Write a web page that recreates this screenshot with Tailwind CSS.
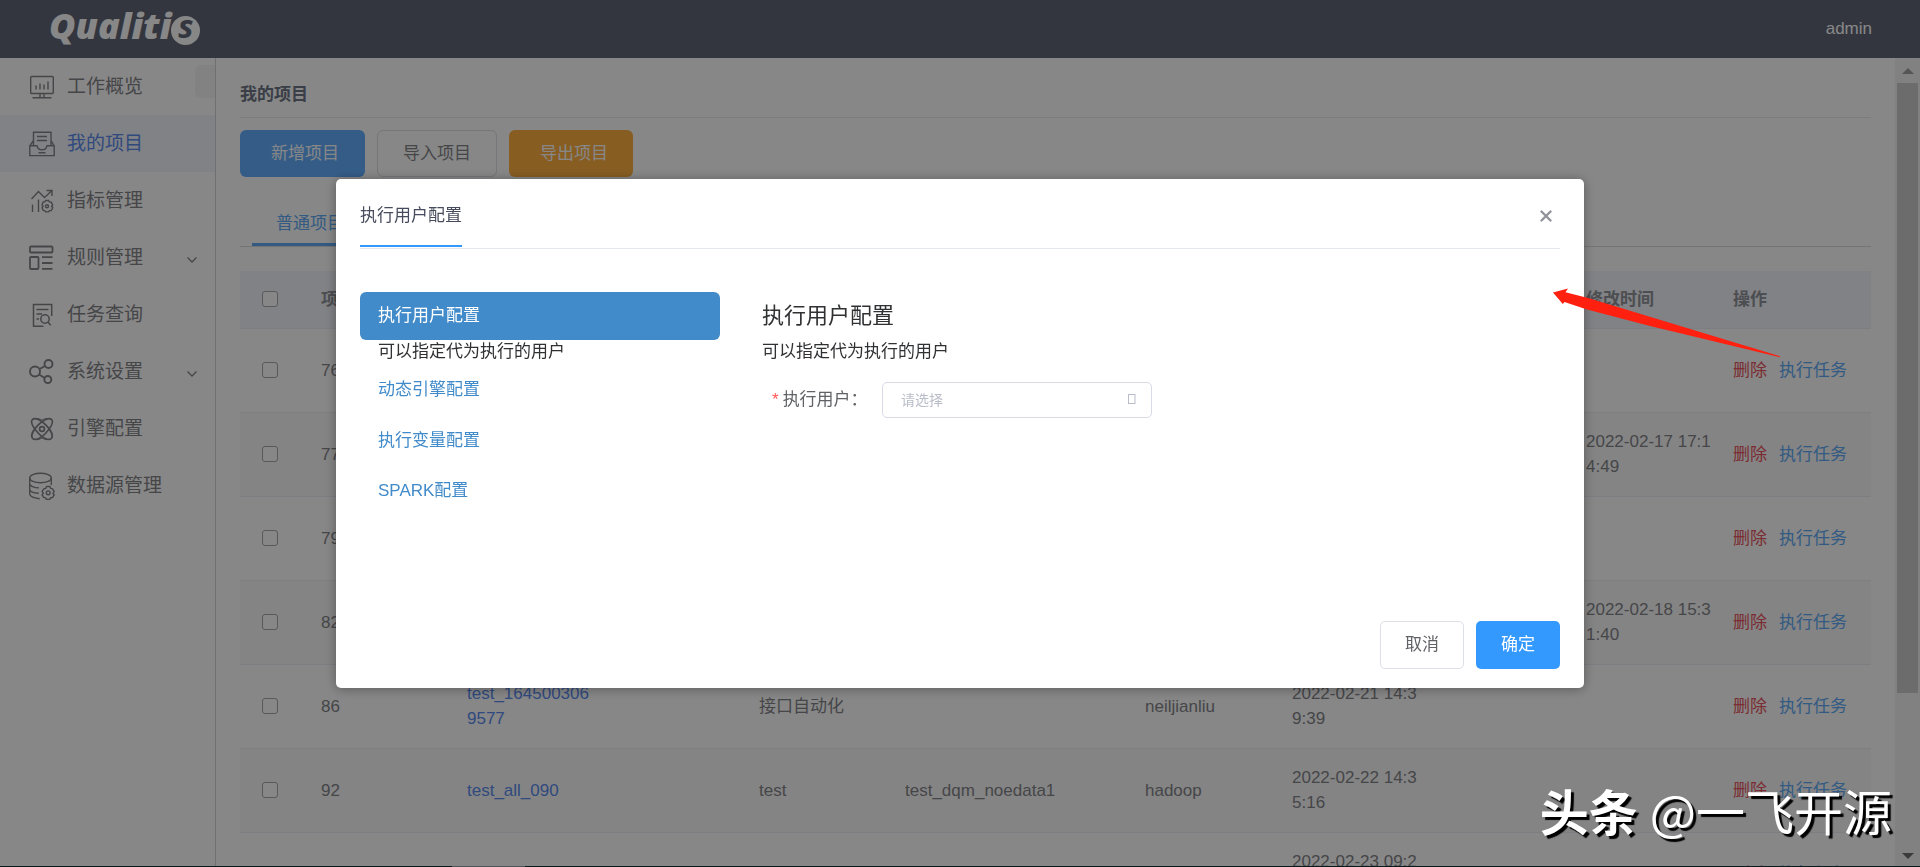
<!DOCTYPE html>
<html lang="zh-CN">
<head>
<meta charset="utf-8">
<title>Qualitis</title>
<script src="https://cdn.jsdelivr.net/npm/@tailwindcss/browser@4"></script>
</head>
<body class="h-screen overflow-hidden bg-white font-['Liberation_Sans','Noto_Sans_CJK_SC',sans-serif] text-[17px] leading-[25px] text-[#84858a]">
<div class="flex h-full flex-col">
  <header class="flex h-[58px] shrink-0 items-center justify-between bg-[#606677] pr-12 pb-0.5 pl-[49px]">
    <a href="#" aria-label="Qualitis" class="flex items-center pb-1 text-white">
      <span class="font-['Open_Sans',sans-serif] text-[36px] leading-none font-extrabold italic">Qualiti</span>
      <span class="mt-2 flex size-[29px] items-center justify-center rounded-full bg-white font-['Open_Sans',sans-serif] text-[32px] leading-none font-bold text-[#606677] italic"><span class="-mt-2">s</span></span>
    </a>
    <a href="#" class="text-[17px] text-white">admin</a>
  </header>

  <div class="flex min-h-0 flex-1">
    <nav class="relative w-[216px] shrink-0 border-r border-[#d4d4d8] text-[19px]">
      <button type="button" aria-label="收起" class="absolute top-[7px] right-0 h-[33px] w-5 rounded-l-md bg-[#f6f6f6]"></button>
      <a href="#" class="flex h-[57px] items-center gap-3 pl-[29px]">
        <svg class="size-6.5 shrink-0" viewBox="0 0 26 26" fill="none" stroke="currentColor" stroke-width="1.4"><rect x="1.7" y="2.5" width="22.6" height="17" rx="1"/><path d="M7 15.5v-4M11 15.5v-6M15 15.5v-5M19 15.5v-8M11 19.5v3.5M15 19.5v3.5M3.5 23.7h19"/></svg>
        <span>工作概览</span></a>
      <a href="#" class="flex h-[57px] items-center gap-3 bg-[#f3f5fb] pl-[29px]">
        <svg class="size-6.5 shrink-0" viewBox="0 0 26 26" fill="none" stroke="currentColor" stroke-width="1.4"><path d="M4.500 14.800V1.300h17.500V14.800M.8 14.800 4.500 9.500M25.200 14.800l-3.200-5.300M.8 14.800h7.200c.6 2.600 2.600 4 5 4s4.400-1.400 5-4h7.200v9.800H.8zM8 5.500h10M8 9.500h10M9.500 21.800h7"/></svg>
        <span class="text-[#5b8cef]">我的项目</span></a>
      <a href="#" class="flex h-[57px] items-center gap-3 pl-[29px]">
        <svg class="size-6.5 shrink-0" viewBox="0 0 26 26" fill="none" stroke="currentColor" stroke-width="1.4"><path d="M2.500 11 9.500 3.500l6 6L23 2.500M17.500 2.500H23V8M3.500 16.500V24M9.500 11.500V24"/><path d="m15.800 13.800.8-1.300h3l.9 1.500 1.800.1 1.400 2.900-1.100 1.300 1.100 1.400-1.400 2.800-1.800.1-.9 1.300h-3l-.9-1.300-1.500-.2-1.200-2.800 1.200-1.300-1.200-1.400 1.200-2.900z"/><circle cx="18" cy="18.300" r="1.500"/></svg>
        <span>指标管理</span></a>
      <a href="#" class="flex h-[57px] items-center gap-3 pl-[29px]">
        <svg class="size-6.5 shrink-0" viewBox="0 0 26 26" fill="none" stroke="currentColor" stroke-width="1.800"><rect x="1" y="1.500" width="22.500" height="6" rx="1"/><rect x="1" y="12" width="8.500" height="12" rx="1"/><path d="M13 12.200h10.500M13 18h10.500M13 23.800h10.500"/></svg>
        <span>规则管理</span>
        <svg class="mt-1 mr-[17px] ml-auto h-2 w-3" viewBox="0 0 12 8" fill="none" stroke="currentColor" stroke-width="1.300"><path d="m1.500 1.500 4.500 4.500 4.500-4.500"/></svg></a>
      <a href="#" class="flex h-[57px] items-center gap-3 pl-[29px]">
        <svg class="size-6.5 shrink-0" viewBox="0 0 26 26" fill="none" stroke="currentColor" stroke-width="1.500"><path d="M14.500 24.300H4.500V2.500h18.200V14M7.500 7.500h12M7.500 12h5.500M7.500 17h2.500"/><circle cx="16" cy="17" r="4.200"/><path d="m19 20.300 2.800 3"/></svg>
        <span>任务查询</span></a>
      <a href="#" class="flex h-[57px] items-center gap-3 pl-[29px]">
        <svg class="size-6.5 shrink-0" viewBox="0 0 26 26" fill="none" stroke="currentColor" stroke-width="1.900"><circle cx="6" cy="12.500" r="5"/><circle cx="19.500" cy="5" r="4"/><circle cx="18.800" cy="20.500" r="3.500"/><path d="m10.500 10 5.500-3M10 15.500l5.800 3.500"/></svg>
        <span>系统设置</span>
        <svg class="mt-1 mr-[17px] ml-auto h-2 w-3" viewBox="0 0 12 8" fill="none" stroke="currentColor" stroke-width="1.300"><path d="m1.500 1.500 4.500 4.500 4.500-4.500"/></svg></a>
      <a href="#" class="flex h-[57px] items-center gap-3 pl-[29px]">
        <svg class="size-6.5 shrink-0" viewBox="0 0 26 26" fill="none" stroke="currentColor" stroke-width="1.700"><path d="M3.500 3.500c2.500-2.300 8.500.7 13 5.200s8.300 10.500 6 13.500-8.700 0-13.200-5S1 6 3.500 3.500z"/><path d="M22.500 3.500c-2.500-2.300-8.500.7-13 5.200S1.200 19.200 3.500 22.200s8.700 0 13.200-5S25 6 22.500 3.500z"/><path d="M6 2.600c3-.5 5 .4 7 1.600 2-1.200 4-2.100 7-1.600M6 23.500c3 .5 5-.4 7-1.600 2 1.200 4 2.100 7 1.600" stroke-width="1"/><circle cx="13" cy="13" r="2.400"/></svg>
        <span>引擎配置</span></a>
      <a href="#" class="flex h-[57px] items-center gap-3 pl-[29px]">
        <svg class="h-7 w-6.5 shrink-0" viewBox="0 0 26 28" fill="none" stroke="currentColor" stroke-width="1.400"><ellipse cx="11.500" cy="6" rx="10.800" ry="4.800"/><path d="M.7 6v16c0 2.500 4.500 4.500 10 4.700M22.300 6v7M.7 11.500c0 2.500 4.500 4.200 9.300 4.400M.7 17c0 2.300 4 4 9 4.300"/><path d="m17.500 14.500h3.400l.7 1.800 1.900.6 1.700 2.600-1.200 1.700 1.200 1.800-1.700 2.500-2 .4-.8 1.500h-3.300l-.8-1.600-1.900-.4-1.600-2.500 1.200-1.700-1.200-1.800 1.700-2.500 1.900-.5z"/><circle cx="19.200" cy="20.800" r="1.900"/></svg>
        <span>数据源管理</span></a>
    </nav>

    <main class="min-w-0 flex-1 overflow-hidden px-6 pt-[25px]">
      <h1 class="border-b border-[#e9eaee] pb-2.5 text-[17px] leading-6 font-bold text-[#6f7585]">我的项目</h1>
      <div class="mt-3 flex gap-3">
        <button type="button" class="h-[47px] rounded-md bg-[#62afff] pr-[26px] pl-[31px] text-white">新增项目</button>
        <button type="button" class="h-[47px] rounded-md border border-[#dcdfe6] px-[25px]">导入项目</button>
        <button type="button" class="h-[47px] rounded-md bg-[#ffb040] pr-[25px] pl-[31px] text-white">导出项目</button>
      </div>
      <div role="tablist" class="mt-[22px] flex border-b border-[#dcdcdf] pl-3">
        <button type="button" role="tab" aria-selected="true" class="h-[47px] border-b-3 border-[#60aaf5] px-6 pt-1 text-[#60aaf5]">普通项目</button>
      </div>
      <table class="mt-6 w-full table-fixed border-collapse text-left">
        <colgroup><col class="w-[69px]"><col class="w-[146px]"><col class="w-[146px]"><col class="w-[146px]"><col class="w-[146px]"><col class="w-[240px]"><col class="w-[147px]"><col class="w-[147px]"><col class="w-[147px]"><col class="w-[147px]"><col></colgroup>
        <thead>
          <tr class="h-[57px] border-b border-[#ebeef5] bg-[#f3f5fb] text-[#909399]">
            <th class="pl-[22px]"><input type="checkbox" aria-label="全选" class="block size-4 appearance-none rounded-[3px] border border-[#a8a8ac] bg-white"></th>
            <th class="pl-3">项目ID</th><th></th><th></th><th></th><th></th><th></th><th></th><th></th><th class="pl-3">修改时间</th><th class="pl-3">操作</th>
          </tr>
        </thead>
        <tbody id="rows"></tbody>
      </table>
    </main>

    <div aria-hidden="true" class="flex w-[25px] shrink-0 flex-col items-center bg-[#f4f4f4] pt-2.5 pb-2">
      <svg class="h-1.5 w-3 shrink-0" viewBox="0 0 12 6" fill="#a0a0a0"><path d="M6 0l6 6H0z"/></svg>
      <div class="mt-[9px] w-[21px] flex-1 bg-[#ccc]"></div>
      <svg class="mt-[160px] h-1.5 w-3 shrink-0" viewBox="0 0 12 6" fill="#707070"><path d="M6 6l6-6H0z"/></svg>
    </div>
  </div>
</div>

<div class="fixed inset-0 flex justify-center bg-black/47 pt-[179px]">
  <section role="dialog" aria-modal="true" aria-labelledby="dlg-title" class="flex h-[509px] w-[65%] flex-col rounded-[5px] bg-white px-6 pb-[19px] text-[#606266] shadow-[0_1px_12px_rgba(0,0,0,0.35)]">
    <div class="flex h-[70px] items-start justify-between border-b border-[#e4e7ed]">
      <h2 id="dlg-title" class="h-[68px] border-b-2 border-[#3399ff] pt-6 text-[17px] text-[#464c5b]">执行用户配置</h2>
      <button type="button" aria-label="关闭" class="mt-[31px] mr-2"><svg class="size-3" viewBox="0 0 12 12" fill="none" stroke="#909399" stroke-width="2.400" stroke-linecap="round"><path d="M1.500 1.500l9 9M10.500 1.500l-9 9"/></svg></button>
    </div>
    <div class="flex flex-1 pt-[43px] text-[#303133]">
      <ul class="w-[360px] shrink-0 text-[#428bca]">
        <li><a href="#" class="flex h-12 items-center rounded-md bg-[#428bca] px-[18px] pb-0.5 text-white">执行用户配置</a>
          <p class="px-[18px] pb-px leading-[23px] text-[#303133]">可以指定代为执行的用户</p></li>
        <li><a href="#" class="flex h-[51px] items-center px-[18px]">动态引擎配置</a></li>
        <li><a href="#" class="flex h-[51px] items-center px-[18px]">执行变量配置</a></li>
        <li><a href="#" class="flex h-12 items-center px-[18px]">SPARK配置</a></li>
      </ul>
      <div class="ml-[42px] flex-1 pt-[9px]">
        <h3 class="text-[22px] leading-[30px]">执行用户配置</h3>
        <p class="mt-2">可以指定代为执行的用户</p>
        <div class="mt-[18px] flex items-center text-[#606266]">
          <label for="user" class="w-[120px] pb-0.5 pl-2.5"><span class="mr-1 text-[#ff5757]">*</span>执行用户：</label>
          <div class="relative">
            <select id="user" class="h-9 w-[270px] appearance-none rounded-[5px] border border-[#d8dbe6] bg-white pl-[18px] text-[14px] text-[#b9bdc8]"><option>请选择</option></select>
            <svg class="pointer-events-none absolute top-[12px] right-[16px] h-[10px] w-2" viewBox="0 0 8 10" fill="none" stroke="#b9bdc8"><rect x=".5" y=".5" width="6.500" height="9"/></svg>
          </div>
        </div>
      </div>
    </div>
    <div class="flex justify-end gap-3">
      <button type="button" class="h-12 w-[84px] rounded-[5px] border border-[#dcdfe6] pb-0.5">取消</button>
      <button type="button" class="h-12 w-[84px] rounded-[5px] bg-[#3399ff] pb-0.5 text-white">确定</button>
    </div>
  </section>
</div>

<svg class="pointer-events-none absolute top-[287px] left-[1553px] h-[72px] w-[230px]" viewBox="0 0 230 72" fill="#ff2010" aria-hidden="true"><path d="M0 5.500 15 1.500l-2.500 3.800L35 11l66 20 126 38.300v1L97 39 34 22.500 11.500 15l-1.700 2z"/></svg>
<div class="pointer-events-none absolute right-[28px] bottom-[21px] flex items-center gap-3 font-['Noto_Sans_CJK_SC',sans-serif] text-[49px] leading-[72px] whitespace-nowrap text-white [text-shadow:3px_3px_1px_#000]"><b>头条</b><span>@一飞开源</span></div>
<div class="fixed inset-x-0 bottom-0 h-px bg-[#0a1a1c]"><div class="ml-[452px] h-px w-[73px] bg-[#4a5658]"></div></div>

<script>
const rows = [
  ['76'],
  ['77', '', '', '', '', '', '2022-02-17 17:14:49'],
  ['79'],
  ['82', '', '', '', '', '', '2022-02-18 15:31:40'],
  ['86', 'test_1645003069577', '接口自动化', '', 'neiljianliu', '2022-02-21 14:39:39', ''],
  ['92', 'test_all_090', 'test', 'test_dqm_noedata1', 'hadoop', '2022-02-22 14:35:16', ''],
  ['', '', '', '', '', '2022-02-23 09:25:16', '']
];
document.getElementById('rows').innerHTML = rows.map((r, i) => {
  const c = n => `<td class="pl-3 pr-2 break-all">${r[n] || ''}</td>`;
  return `<tr class="h-[84px] border-b border-[#ebeef5] ${i % 2 ? 'bg-[#fafafa]' : ''}">
    <td class="pl-[22px]"><input type="checkbox" aria-label="选择 ${r[0]}" class="block size-4 appearance-none rounded-[3px] border border-[#a8a8ac] bg-white"></td>
    ${c(0)}<td class="pl-3 pr-2 break-all"><a href="#" class="text-[#5b8cef]">${r[1] || ''}</a></td><td></td>${c(2)}${c(3)}${c(4)}${c(5)}<td></td>${c(6)}
    <td class="pl-3 whitespace-nowrap"><a href="#" class="mr-3 text-[#e85560]">删除</a><a href="#" class="text-[#60aaf5]">执行任务</a></td></tr>`;
}).join('');
</script>
</body>
</html>
